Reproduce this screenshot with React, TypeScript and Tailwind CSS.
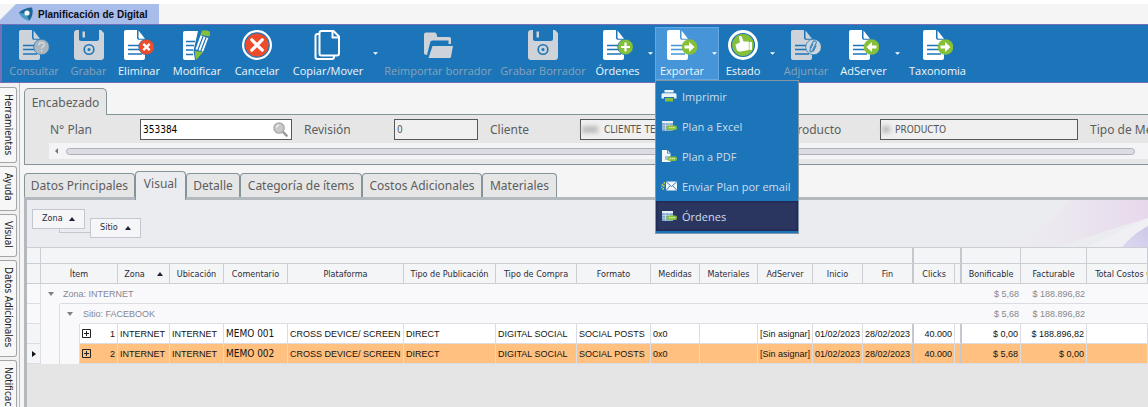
import React from 'react';

type BadgeKind = 'help' | 'cross' | 'plus' | 'right' | 'left' | 'clip';

const BLUE = '#1c75b9';
const GREEN = '#86bf3a';

function Badge({ kind }: { kind: BadgeKind }) {
  const arrow = 'M17.500 15.500h4.500v-3.500l5.500 5-5.500 5v-3.500h-4.500z';
  return (
    <g>
      {kind === 'help' && (
        <>
          <circle cx="22.500" cy="17" r="7.800" fill="#aab6c0" stroke={BLUE} strokeWidth=".7" />
          <path d="M20 15.200c0-3.600 5.200-3.300 5.200-.4 0 2-2.600 1.900-2.600 4M22.600 20.300v1.500" fill="none" stroke="#d5dade" strokeWidth="1.500" />
        </>
      )}
      {kind === 'cross' && (
        <>
          <circle cx="22.500" cy="17" r="7.800" fill="#ee4b2b" stroke={BLUE} strokeWidth=".7" />
          <path d="m19.300 13.800 6.400 6.400m0-6.400-6.400 6.400" stroke="#fff" strokeWidth="2.400" />
        </>
      )}
      {kind === 'plus' && (
        <>
          <circle cx="22.500" cy="17" r="7.800" fill={GREEN} stroke={BLUE} strokeWidth=".7" />
          <path d="M22.500 12.500v9M18 17h9" stroke="#fff" strokeWidth="2.200" />
        </>
      )}
      {(kind === 'right' || kind === 'left') && (
        <>
          <circle cx="22.500" cy="17" r="7.800" fill={GREEN} />
          <path d={arrow} fill="#fff" transform={kind === 'left' ? 'matrix(-1 0 0 1 45 0)' : undefined} />
        </>
      )}
      {kind === 'clip' && (
        <>
          <circle cx="22.500" cy="17" r="7.800" fill="#cfd6dc" stroke={BLUE} strokeWidth=".7" />
          <path d="m19 18 3-6c1-2 4-1 3.200 1l-4 8c-.8 1.600-3 .6-2.300-1l3-6m3.300 1.500-3 6" fill="none" stroke="#3f8ac2" strokeWidth="1.200" />
        </>
      )}
    </g>
  );
}

function DocIcon({ badge, muted = false, line = BLUE }: { badge: BadgeKind; muted?: boolean; line?: string }) {
  const fill = muted ? '#cdd3d8' : '#fff';
  return (
    <svg viewBox="0 0 30 30" className="size-[30px]" aria-hidden="true">
      <path
        d="M2 0h11v7.500c0 1.500.8 2.300 2.200 2.300H21v18.200c0 1.200-.8 2-2 2H2c-1.200 0-2-.8-2-2V2C0 .8.800 0 2 0z"
        fill={fill}
      />
      <path d="M14.500.6 21 8.700h-5c-1 0-1.500-.5-1.500-1.500z" fill={fill} />
      <path d="M4 15.500h12M4 19.500h12M4 24h14" stroke={line} strokeWidth="1.300" />
      <Badge kind={badge} />
    </svg>
  );
}

function EditIcon() {
  return (
    <svg viewBox="0 0 30 30" className="size-[30px]" aria-hidden="true">
      <path d="M3 1h13l-4.500 19.500L13 30H3c-1.200 0-2-.8-2-2V3c0-1.200.8-2 2-2z" fill="#fff" />
      <path d="M4 11.500h9M4 15.500h8M4 20h7M4 24.500h7" stroke={BLUE} strokeWidth="1.300" />
      <path d="m18.200 4.500 8.800 3.300-5.500 14.700-8.800-3z" fill="#fff" stroke={BLUE} strokeWidth="1.200" />
      <path d="m21.200 6-5.500 14.500M24.200 7l-5.500 14.500" stroke={BLUE} strokeWidth="1.200" />
      <path d="M20 .6h5.500l2.500 1.200-.3 4.700-9.200-1.700z" fill={GREEN} />
      <path d="m12.700 21 8.500 1-7.200 8z" fill={GREEN} />
    </svg>
  );
}

function DiskIcon() {
  return (
    <svg viewBox="0 0 30 30" className="size-[30px]" aria-hidden="true">
      <path d="M3 0h2v9c0 1.200.8 2 2 2h16c1.200 0 2-.8 2-2V0h2l3 3v24c0 1.800-1.200 3-3 3H3c-1.800 0-3-1.200-3-3V3c0-1.800 1.200-3 3-3z" fill="#cdd3d8" />
      <rect x="8.500" y="1.500" width="2.500" height="6" fill="#cdd3d8" />
      <circle cx="15" cy="19.500" r="4.800" fill="none" stroke={BLUE} strokeWidth="1.600" />
      <circle cx="15" cy="19.500" r="1.500" fill={BLUE} />
    </svg>
  );
}

function CancelIcon() {
  return (
    <svg viewBox="0 0 30 30" className="size-[30px]" aria-hidden="true">
      <circle cx="15" cy="15" r="15" fill="#fff" />
      <circle cx="15" cy="15" r="12.200" fill="#ee4b2b" stroke={BLUE} strokeWidth="1.200" />
      <path d="m9.800 9.800 10.400 10.400m0-10.400L9.800 20.200" stroke="#fff" strokeWidth="3.200" strokeLinecap="round" />
    </svg>
  );
}

function CopyIcon() {
  return (
    <svg viewBox="0 0 30 30" className="size-[30px]" fill="none" stroke="#fff" strokeWidth="2" strokeLinejoin="round" aria-hidden="true">
      <path d="M8.500 1h12l5.500 5.500v17c0 1.200-.8 2-2 2H8.500c-1.200 0-2-.8-2-2V3c0-1.200.8-2 2-2z" />
      <path d="M19.500 1.500V7.500H26" />
      <path d="M6 4H4.500c-1.200 0-2 .8-2 2v21c0 1.200.8 2 2 2H19c1.200 0 2-.8 2-2v-1" />
    </svg>
  );
}

function FolderIcon() {
  return (
    <svg viewBox="0 0 30 30" className="size-[30px]" fill="#cdd3d8" aria-hidden="true">
      <path d="M1 4.500C1 3.200 1.800 2.500 3 2.500h8.500c1 0 1.700.5 2 1.500l.8 3H26c1.200 0 2 .8 2 2v5h-2.500v-3.500H9.500c-1.200 0-2 .7-2.300 1.800L4 25c-1.800 0-3-.8-3-2z" />
      <path d="M9.500 16H30l-2 10.500c-.2 1-.8 1.500-1.800 1.500H5.500z" />
    </svg>
  );
}

function ThumbIcon() {
  return (
    <svg viewBox="0 0 30 30" className="size-[30px]" aria-hidden="true">
      <circle cx="15" cy="15" r="15" fill="#fff" />
      <circle cx="15" cy="15" r="11.500" fill={GREEN} stroke={BLUE} strokeWidth="1.200" />
      <path d="M7.500 14.500 12 12.500 11 7.500c-.2-1.800 2.200-2 2.800-.5l1.800 4.500h5.200v8.500l-8 1.500c-1.800.3-3.800-.5-4.300-2.500z" fill="#fff" />
      <path d="M21.500 12h2.500v8h-2.500z" fill="#fff" />
    </svg>
  );
}

function ToolButton({ label, width, icon, disabled = false }: { label: string; width: string; icon: React.ReactNode; disabled?: boolean }) {
  return (
    <button
      type="button"
      disabled={disabled}
      className={`flex h-[53px] shrink-0 flex-col items-center gap-[3px] whitespace-nowrap pt-[3px] text-[11px] leading-[15px] ${width} ${disabled ? 'text-[#8aa3b7]' : 'text-[#f0f6fb]'}`}
    >
      {icon}
      <span>{label}</span>
    </button>
  );
}

function DropArrow({ label }: { label: string }) {
  return (
    <button type="button" aria-label={label} className="flex h-[53px] w-[10px] shrink-0 items-center justify-center">
      <svg viewBox="0 0 6 3" className="h-[3px] w-[5px]" aria-hidden="true">
        <path d="M0 0h6L3 3z" fill="#fff" />
      </svg>
    </button>
  );
}

function MenuIcon({ kind }: { kind: 'print' | 'sheet' | 'pdf' | 'mail' }) {
  return (
    <svg viewBox="0 0 16 12" className="h-3 w-4 shrink-0" aria-hidden="true">
      {kind === 'print' && (
        <>
          <path d="M3.500 0h9v2.500h-9zM2 3.300h12c1 0 1.500.6 1.500 1.500v3.700H13V7H3v1.500H.5V4.800c0-.9.500-1.500 1.500-1.500z" fill="#eef5fa" />
          <path d="M4 8h8v3.500H4z" fill={GREEN} />
        </>
      )}
      {kind === 'sheet' && (
        <>
          <path d="M1 1h11v10H1z" fill="#7fa8cc" />
          <path d="M1 1h11v2.200H1z" fill="#e4eef6" />
          <path d="M1 5.500h11M1 8h11M4.500 3v8M8 3v8" stroke="#dfe9f1" strokeWidth=".6" />
          <rect x="5.500" y="5.500" width="10.500" height="4.500" rx="2" fill={GREEN} />
          <path d="M8 7.700h6" stroke="#d9ecc0" strokeWidth="1.200" strokeDasharray="1.500 .6" />
        </>
      )}
      {kind === 'pdf' && (
        <>
          <path d="M1 0h5.500l3 3.200V12H1z" fill="#f3f7fa" />
          <path d="M6.500 0v3.200h3" fill="none" stroke={BLUE} strokeWidth=".8" />
          <path d="M4 7h7M4 9h6" stroke={BLUE} strokeWidth=".8" />
          <rect x="6.500" y="6.500" width="9.500" height="4.500" rx="2" fill={GREEN} />
          <path d="M8.500 8.700h5.500" stroke="#d9ecc0" strokeWidth="1.200" strokeDasharray="1.500 .6" />
        </>
      )}
      {kind === 'mail' && (
        <>
          <path d="M5 1.500h11v9H5z" fill="#f3f7fa" />
          <path d="m5 1.500 5.500 5 5.500-5M5 10.500l4-4.500m7 4.500-4-4.500" fill="none" stroke={BLUE} strokeWidth=".9" />
          <path d="M3.500 2 2 10M1.500 4 .5 8" stroke="#b4c84a" strokeWidth="1.500" strokeDasharray="2 1" />
        </>
      )}
    </svg>
  );
}

const exportMenu = [
  { label: 'Imprimir', icon: 'print' },
  { label: 'Plan a Excel', icon: 'sheet' },
  { label: 'Plan a PDF', icon: 'pdf' },
  { label: 'Enviar Plan por email', icon: 'mail' },
  { label: 'Órdenes', icon: 'sheet', active: true },
] as const;

function Toolbar() {
  return (
    <div className="flex h-[59px] shrink-0 border-y border-l-2 border-[#7470b8] bg-[#1c75b9] pl-px pt-[2px] font-['Open_Sans','Noto_Sans',sans-serif]">
      <ToolButton label="Consultar" width="w-[62px]" icon={<DocIcon badge="help" muted />} disabled />
      <ToolButton label="Grabar" width="w-[47px]" icon={<DiskIcon />} disabled />
      <ToolButton label="Eliminar" width="w-[54px]" icon={<DocIcon badge="cross" />} />
      <ToolButton label="Modificar" width="w-[62px]" icon={<EditIcon />} />
      <ToolButton label="Cancelar" width="w-[58px]" icon={<CancelIcon />} />
      <ToolButton label="Copiar/Mover" width="w-[84px]" icon={<CopyIcon />} />
      <DropArrow label="Opciones de copia" />
      <ToolButton label="Reimportar borrador" width="w-[116px]" icon={<FolderIcon />} disabled />
      <ToolButton label="Grabar Borrador" width="w-[94px]" icon={<DiskIcon />} disabled />
      <ToolButton label="Órdenes" width="w-[55px]" icon={<DocIcon badge="plus" />} />
      <DropArrow label="Opciones de órdenes" />
      <div className="relative z-10 flex h-[53px] shrink-0 bg-[#4595d8] shadow-[inset_0_0_0_1px_#62a8e4]">
        <ToolButton label="Exportar" width="w-[54px]" icon={<DocIcon badge="right" line="#4595d8" />} />
        <DropArrow label="Opciones de exportación" />
        <ul className="absolute left-0 top-full w-[144px] border border-[#8497a8] bg-[#1c75b9] pb-[2px]">
          {exportMenu.map((item) => (
            <li key={item.label}>
              <button
                type="button"
                className={`flex h-[30px] w-full items-center gap-[5px] whitespace-nowrap pl-[5px] text-[11px] leading-[15px] text-[#cddeed] ${'active' in item ? 'bg-[#2b3660] shadow-[inset_0_0_3px_#0f1b45]' : ''}`}
              >
                <MenuIcon kind={item.icon} />
                {item.label}
              </button>
            </li>
          ))}
        </ul>
      </div>
      <ToolButton label="Estado" width="w-[48px]" icon={<ThumbIcon />} />
      <DropArrow label="Opciones de estado" />
      <ToolButton label="Adjuntar" width="w-[58px]" icon={<DocIcon badge="clip" muted />} disabled />
      <ToolButton label="AdServer" width="w-[57px]" icon={<DocIcon badge="left" />} />
      <DropArrow label="Opciones de AdServer" />
      <ToolButton label="Taxonomia" width="w-[71px]" icon={<DocIcon badge="right" />} />
    </div>
  );
}

const railTabs = [
  { label: 'Herramientas', size: 'h-[76px]' },
  { label: 'Ayuda', size: 'h-[45px]' },
  { label: 'Visual', size: 'h-[43px]' },
  { label: 'Datos Adicionales', size: 'h-[97px]' },
  { label: 'Notificaciones', size: 'h-[84px]' },
];

function SideRail() {
  return (
    <nav className="flex w-5 shrink-0 flex-col gap-[3px] overflow-hidden border-r border-[#b9bcbf] bg-[#f1f1f1] pr-[2px] pt-1">
      {railTabs.map((tab) => (
        <button
          key={tab.label}
          type="button"
          className={`flex w-full shrink-0 items-center justify-start rounded-r-[3px] border border-l-0 border-[#a3a6a9] bg-[#f7f7f7] pt-[6px] text-[10px] leading-[14px] text-[#1d1d1d] [writing-mode:vertical-rl] ${tab.size}`}
        >
          <span className="h-full whitespace-nowrap text-left">{tab.label}</span>
        </button>
      ))}
    </nav>
  );
}

function Field({ id, label, value, width, inset = 'pl-[2px]', smudge, search = false }: { id: string; label: string; value: string; width: string; inset?: string; smudge?: string; search?: boolean }) {
  return (
    <div className="flex shrink-0 items-center">
      <label htmlFor={id} className="w-[90px] font-['Noto_Sans',sans-serif] text-[12px] leading-4 text-[#5b5e60]">
        {label}
      </label>
      <div className={`relative ${width}`}>
        <input
          id={id}
          defaultValue={value}
          readOnly={!search}
          className={`block h-[21px] w-full border border-[#55585a] text-[10px] outline-none ${search ? 'bg-white text-black' : 'bg-[#f0f0f0] text-[#555]'} ${inset}`}
        />
        {smudge && <span className={`absolute left-[2px] top-[7px] h-[7px] bg-[#bcbcbc] blur-[2px] ${smudge}`} />}
        {search && (
          <svg viewBox="0 0 16 16" className="absolute right-1 top-[3px] size-[15px]" aria-hidden="true">
            <path d="m10 10 4.500 4.500" stroke="#9a9a9a" strokeWidth="2.600" strokeLinecap="round" />
            <circle cx="6.500" cy="6.500" r="5.500" fill="#c9c9c9" stroke="#a6a6a6" strokeWidth="1.300" />
            <path d="M3.500 6a3 3 0 0 1 3-2.600" fill="none" stroke="#f4f4f4" strokeWidth="1.200" />
          </svg>
        )}
      </div>
    </div>
  );
}

function HeaderPanel() {
  return (
    <section className="shrink-0">
      <h2 className="relative -mb-px h-[27px] w-[83px] rounded-t-[5px] border border-b-0 border-[#84959a] bg-[#e6e6e6] pt-[6px] text-center font-['Noto_Sans',sans-serif] text-[12px] font-normal leading-4 text-[#5b5e60]">
        Encabezado
      </h2>
      <div className="border border-r-0 border-[#84959a] bg-[#e6e6e6] pb-[5px] pt-1">
        <div className="flex gap-3 overflow-hidden pl-[25px]">
          <Field id="plan" label="N° Plan" value="353384" width="w-[152px]" search />
          <Field id="revision" label="Revisión" value="0" width="w-[84px]" />
          <Field id="cliente" label="Cliente" value="CLIENTE TEST" width="w-[198px]" inset="pl-[23px]" smudge="w-4" />
          <Field id="producto" label="Producto" value="PRODUCTO" width="w-[198px]" inset="pl-[14px]" smudge="w-2" />
          <span className="shrink-0 font-['Noto_Sans',sans-serif] text-[12px] leading-[21px] text-[#5b5e60]">Tipo de Medio</span>
        </div>
        <div className="ml-6 mt-[3px] flex h-4 items-center gap-2 bg-[#f4f4f7] pl-[6px] pr-[13px]">
          <svg viewBox="0 0 3 6" className="h-[6px] w-[3px]" aria-hidden="true">
            <path d="M3 0v6L0 3z" fill="#73767c" />
          </svg>
          <div className="h-[7px] flex-1 rounded-full border border-[#adb0b9] bg-[#dcdde2]" />
        </div>
      </div>
    </section>
  );
}

const pageTabs = [
  { label: 'Datos Principales', width: 'w-[111px]' },
  { label: 'Visual', width: 'w-[51px]', active: true },
  { label: 'Detalle', width: 'w-[54px]' },
  { label: 'Categoría de ítems', width: 'w-[122px]' },
  { label: 'Costos Adicionales', width: 'w-[120px]' },
  { label: 'Materiales', width: 'w-[75px]' },
];

function PageTabs() {
  return (
    <div role="tablist" className="flex h-[26px] shrink-0 items-end font-['Noto_Sans',sans-serif] text-[12px] leading-4 text-[#5b5e60]">
      {pageTabs.map((tab) => (
        <button
          key={tab.label}
          type="button"
          role="tab"
          aria-selected={!!tab.active}
          className={`shrink-0 whitespace-nowrap rounded-t-[4px] border border-b-0 border-[#84959a] ${tab.width} ${tab.active ? 'relative -mb-[3px] h-[29px] bg-[#ebecf0] pb-1' : 'h-6 bg-[#e6e6e6]'}`}
        >
          {tab.label}
        </button>
      ))}
    </div>
  );
}

function SortUp() {
  return (
    <svg viewBox="0 0 6 4" className="h-1 w-[6px] shrink-0" aria-hidden="true">
      <path d="M3 0 6 4H0z" fill="#1f2233" />
    </svg>
  );
}

function GroupArea() {
  return (
    <div className="relative h-[47px] overflow-hidden bg-[#ebecf0] pl-[5px] pt-[9px] text-[9px] text-[#2a2c3a]">
      <svg viewBox="0 0 150 47" className="absolute right-0 top-0 h-[47px] w-[150px]" aria-hidden="true">
        <defs>
          <linearGradient id="rose" x1="0" x2="1" y1="0" y2="0">
            <stop offset="0" stopColor="#ebecf0" />
            <stop offset=".4" stopColor="#ebe8ef" />
            <stop offset="1" stopColor="#e7d3ea" />
          </linearGradient>
          <linearGradient id="violet" x1="0" x2="1" y1="1" y2="0">
            <stop offset="0" stopColor="#dcd8ef" />
            <stop offset="1" stopColor="#cfc8ea" />
          </linearGradient>
        </defs>
        <path d="M0 47C40 35 60 12 72 0h78v18C110 30 80 40 60 47z" fill="url(#rose)" opacity=".8" />
        <path d="M90 47c20-10 40-20 60-29v10c-12 5-18 11-24 19z" fill="#f0f0f4" />
        <path d="M124 47c8-9 16-16 26-21v21z" fill="url(#violet)" />
      </svg>
      <div className="relative flex items-start">
        <button type="button" className="flex h-5 w-[53px] items-center justify-between border border-[#c5c7d0] bg-[#f6f6f9] px-[9px]">
          Zona <SortUp />
        </button>
        <span className="-ml-[26px] mt-5 h-1 w-[31px] border-b border-l border-[#c5c7d0]" />
        <button type="button" className="mt-[9px] flex h-5 w-[51px] items-center justify-between border border-[#c5c7d0] bg-[#f6f6f9] px-[9px]">
          Sitio <SortUp />
        </button>
      </div>
    </div>
  );
}

const columns = [
  'w-[14px]', 'w-[19px]', 'w-[20px]', 'w-[38px]', 'w-[52px]', 'w-[54px]', 'w-[64px]', 'w-[116px]', 'w-[92px]',
  'w-[81px]', 'w-[74px]', 'w-[49px]', 'w-[58px]', 'w-[55px]', 'w-[50px]', 'w-[51px]', 'w-[41px]', 'w-[7px]',
  'w-[59px]', 'w-[66px]', 'w-auto',
];

const headings = [
  'Ubicación', 'Comentario', 'Plataforma', 'Tipo de Publicación', 'Tipo de Compra', 'Formato', 'Medidas',
  'Materiales', 'AdServer', 'Inicio', 'Fin', 'Clicks', '', 'Bonificable', 'Facturable',
];

const rows = [
  { n: 1, memo: 'MEMO 001', bonus: '$ 0,00', bill: '$ 188.896,82', current: false },
  { n: 2, memo: 'MEMO 002', bonus: '$ 5,68', bill: '$ 0,00', current: true },
];

const th = 'border-b border-r border-[#cdced5] bg-[#f4f5f7] p-0 font-normal';
const td = 'border-b border-r border-[#dcdde3] px-[2px] py-0';
const total = 'border-b border-[#dcdde3] px-[2px] py-0 text-right';
const thick = 'border-r-2 border-r-[#c6c7cf]';

function thickAfter(name: string) {
  return name === 'Fin' || name === '' ? thick : '';
}

function Expander() {
  return (
    <svg viewBox="0 0 6 4" className="mx-auto h-1 w-[6px]" aria-hidden="true">
      <path d="M0 0h6L3 4z" fill="#7d808a" />
    </svg>
  );
}

function DataTable() {
  return (
    <table className="w-full table-fixed border-separate border-spacing-0 whitespace-nowrap border-t border-[#cdced5] text-[9px] leading-3 text-[#2a2c3a]">
      <colgroup>
        {columns.map((width, i) => (
          <col key={i} className={width} />
        ))}
      </colgroup>
      <thead>
        <tr className="h-4">
          <td className={th} />
          <td colSpan={15} className={`${th} ${thick}`} />
          <td colSpan={2} className={`${th} ${thick}`} />
          <td className={th} />
          <td className={th} />
          <td className={th} />
        </tr>
        <tr className="h-5">
          <td className={th} />
          <th colSpan={3} className={th}>Ítem</th>
          <th className={th}>
            <span className="flex items-center justify-center gap-3">Zona <SortUp /></span>
          </th>
          {headings.map((name, i) => (
            <th key={i} className={`${th} ${thickAfter(name)}`}>{name}</th>
          ))}
          <th className={`${th} overflow-hidden pl-2 text-left`}>Total Costos C</th>
        </tr>
      </thead>
      <tbody className="font-['Liberation_Sans',Arial,sans-serif]">
        <tr className="h-5 bg-[#f9f9fb] text-[#858892]">
          <td className={td} />
          <td className="p-0"><Expander /></td>
          <td colSpan={16} className="border-b border-[#dcdde3] p-0 pl-[3px]">Zona: INTERNET</td>
          <td className={total}>$ 5,68</td>
          <td className={total}>$ 188.896,82</td>
          <td className={total} />
        </tr>
        <tr className="h-5 bg-[#f9f9fb] text-[#858892]">
          <td className={td} />
          <td className="border-r border-[#dcdde3] p-0" />
          <td className="p-0"><Expander /></td>
          <td colSpan={15} className="border-b border-[#dcdde3] p-0 pl-[3px]">Sitio: FACEBOOK</td>
          <td className={total}>$ 5,68</td>
          <td className={total}>$ 188.896,82</td>
          <td className={total} />
        </tr>
        {rows.map((row) => {
          const cell = `${td} ${row.current ? 'bg-[#ffc080]' : 'bg-white'} text-[#141414]`;
          return (
            <tr key={row.n} className="h-5 bg-[#f9f9fb]">
              <td className={`${td} bg-[#f4f5f7]`}>
                {row.current && (
                  <svg viewBox="0 0 4 6" className="mx-auto h-[6px] w-1" aria-hidden="true">
                    <path d="M0 0v6l4-3z" fill="#111" />
                  </svg>
                )}
              </td>
              <td className="border-r border-[#dcdde3] p-0" />
              <td className="border-r border-[#dcdde3] p-0" />
              <td className={cell}>
                <span className="flex items-center justify-between">
                  <svg viewBox="0 0 9 9" className="size-[9px]" aria-hidden="true">
                    <path d="M.5.5h8v8h-8zM4.500 2v5M2 4.500h5" fill="none" stroke="#222" />
                  </svg>
                  {row.n}
                </span>
              </td>
              <td className={cell}>INTERNET</td>
              <td className={cell}>INTERNET</td>
              <td className={`${cell} font-['DejaVu_Sans_Condensed',sans-serif] text-[10px]`}>{row.memo}</td>
              <td className={cell}>CROSS DEVICE/ SCREEN</td>
              <td className={cell}>DIRECT</td>
              <td className={cell}>DIGITAL SOCIAL</td>
              <td className={cell}>SOCIAL POSTS</td>
              <td className={cell}>0x0</td>
              <td className={cell} />
              <td className={cell}>[Sin asignar]</td>
              <td className={cell}>01/02/2023</td>
              <td className={`${cell} ${thick}`}>28/02/2023</td>
              <td className={`${cell} text-right`}>40.000</td>
              <td className={`${cell} ${thick}`} />
              <td className={`${cell} text-right`}>{row.bonus}</td>
              <td className={`${cell} text-right`}>{row.bill}</td>
              <td className={cell} />
            </tr>
          );
        })}
      </tbody>
    </table>
  );
}

export default function App() {
  return (
    <div className="flex h-screen flex-col overflow-hidden bg-[#f5f5f5] font-['DejaVu_Sans_Condensed','DejaVu_Sans',sans-serif]">
      <header className="shrink-0 border-t-4 border-white">
        <div className="flex h-5 w-[159px] items-center gap-[5px] bg-[#a9bdea] pl-[19px] [clip-path:polygon(0_80%,16px_0,100%_0,100%_100%,0_100%)]">
          <svg viewBox="0 0 14 14" className="size-[14px] shrink-0" aria-hidden="true">
            <path d="M0 5.500C3 2.500 8 .5 13 .5c1.500 4 .5 9-2.500 13C6 13 1.500 9.500 0 5.500z" fill="#1d6796" />
            <path d="M10.500 13.500C6 13 1.500 9.500 0 5.500l7 1.500z" fill="#4c9ac4" />
            <circle cx="8" cy="6" r="2.600" fill="#eef6fb" />
          </svg>
          <h1 className="whitespace-nowrap pt-px font-['Liberation_Sans',sans-serif] text-[10px] font-bold leading-4 text-[#0c0c14]">
            Planificación de Digital
          </h1>
        </div>
      </header>
      <Toolbar />
      <div className="flex min-h-0 flex-1">
        <SideRail />
        <main className="flex min-w-0 flex-1 flex-col pl-1 pt-[5px]">
          <HeaderPanel />
          <div className="h-[6px] shrink-0" />
          <PageTabs />
          <div className="min-h-0 flex-1 border-l-[3px] border-t-[3px] border-[#b3babf] bg-[#e5e5e5]">
            <GroupArea />
            <DataTable />
          </div>
        </main>
      </div>
    </div>
  );
}
